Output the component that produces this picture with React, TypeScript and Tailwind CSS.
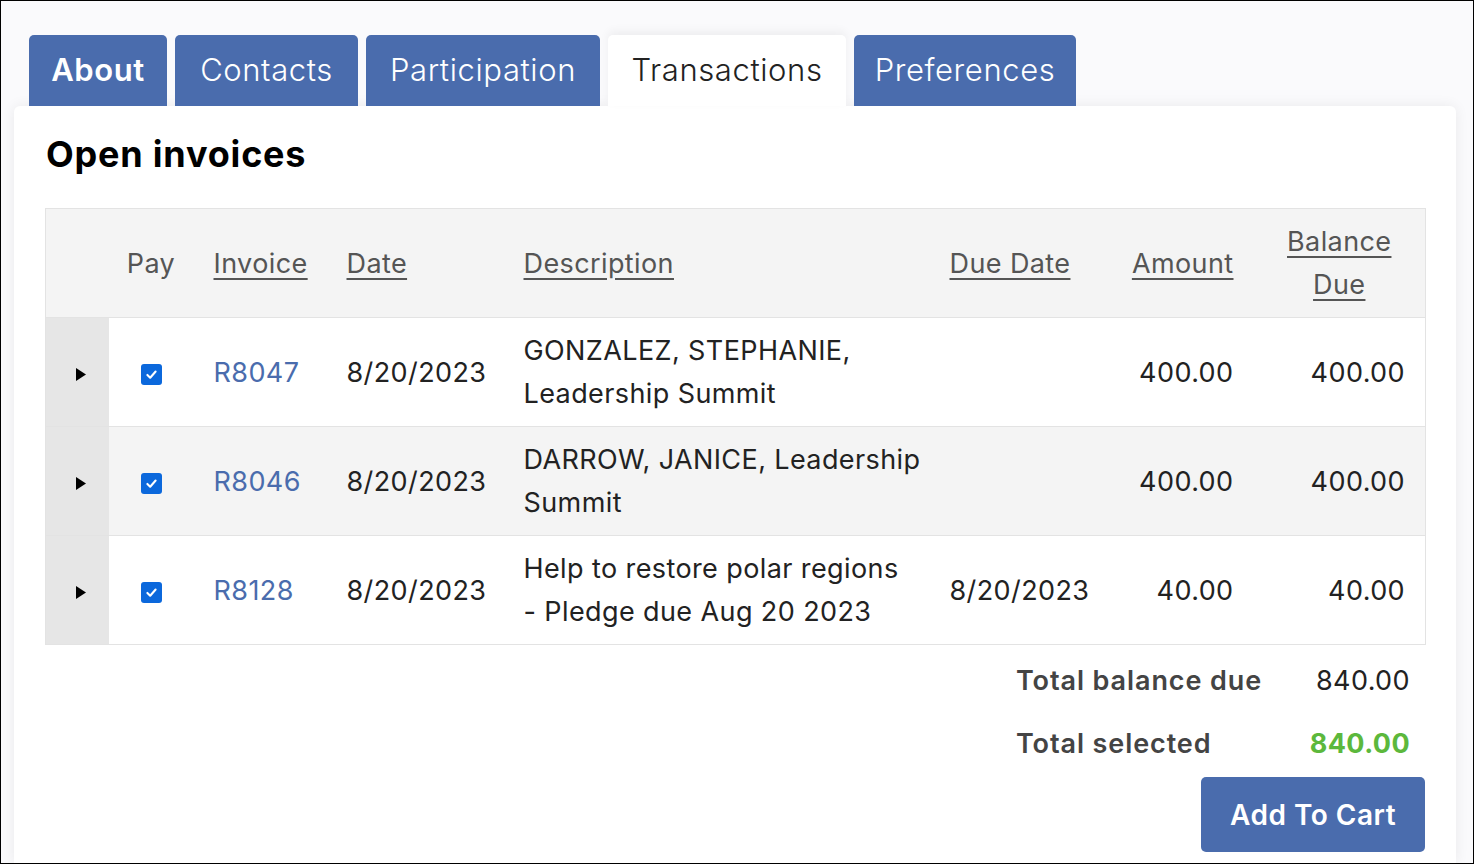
import React from 'react';

type Row = {
  invoice: string;
  date: string;
  desc: string[];
  due: string;
  amount: string;
  balance: string;
};

const rows: Row[] = [
  { invoice: 'R8047', date: '8/20/2023', desc: ['GONZALEZ, STEPHANIE,', 'Leadership Summit'], due: '', amount: '400.00', balance: '400.00' },
  { invoice: 'R8046', date: '8/20/2023', desc: ['DARROW, JANICE, Leadership', 'Summit'], due: '', amount: '400.00', balance: '400.00' },
  { invoice: 'R8128', date: '8/20/2023', desc: ['Help to restore polar regions', '- Pledge due Aug 20 2023'], due: '8/20/2023', amount: '40.00', balance: '40.00' },
];

const tabs = [
  { label: 'About', w: 'w-[138px]', bold: true },
  { label: 'Contacts', w: 'w-[183px]' },
  { label: 'Participation', w: 'w-[234px]' },
  { label: 'Transactions', w: 'w-[238px]', active: true },
  { label: 'Preferences', w: 'w-[222px]' },
];

const Check = () => (
  <span className="inline-flex w-[21px] h-[21px] rounded-[3px] bg-[#0b68dc] items-center justify-center align-middle">
    <svg width="13" height="13" viewBox="0 0 12 12" fill="none">
      <path d="M2.2 6.4 L4.8 9 L9.8 3.2" stroke="white" strokeWidth="1.9" strokeLinecap="round" strokeLinejoin="round" />
    </svg>
  </span>
);

const Caret = () => (
  <svg width="10" height="13" viewBox="0 0 10 13" className="inline-block">
    <polygon points="0,0 10,6.5 0,13" fill="#000" />
  </svg>
);

const App: React.FC = () => {
  return (
    <div
      className="w-[1474px] h-[864px] border border-black bg-[#fafafc] overflow-hidden flex flex-col"
      style={{ fontFamily: 'Inter, "Noto Sans", sans-serif' }}
    >
      {/* Tabs */}
      <div className="flex gap-2 pl-[28px] pt-[34px]">
        {tabs.map((t) => (
          <div
            key={t.label}
            className={`${t.w} h-[71px] rounded-t-[5px] flex items-center justify-center text-[31px] tracking-[0.6px] relative z-10 ${
              t.active
                ? 'bg-white text-[#222] font-light shadow-[0_-4px_10px_rgba(0,0,0,0.05)]'
                : 'bg-[#4a6cad] text-white'
            } ${t.bold ? 'font-semibold' : t.active ? '' : 'font-light'}`}
          >
            {t.label}
          </div>
        ))}
      </div>

      {/* Card */}
      <div className="ml-[13px] mr-[17px] flex-1 bg-white rounded-t-[6px] shadow-[0_0_14px_rgba(0,0,0,0.07)] px-[31px] pt-[27px]">
        <h1 className="text-[36px] leading-[42px] font-bold tracking-[0.8px] text-black mb-[33px] pl-[1px]">Open invoices</h1>

        <table className="w-[1380px] table-fixed border-collapse text-[27px] leading-[43px] tracking-[0.4px] text-[#222]">
          <colgroup>
            <col className="w-[63px]" />
            <col className="w-[85px]" />
            <col className="w-[133px]" />
            <col className="w-[177px]" />
            <col className="w-[426px]" />
            <col className="w-[178px]" />
            <col className="w-[146px]" />
            <col className="w-[172px]" />
          </colgroup>
          <thead>
            <tr className="bg-[#f4f4f4] text-[#555] border border-[#e3e3e3]">
              <th className="font-normal py-[11px]"></th>
              <th className="font-normal text-center">Pay</th>
              <th className="font-normal text-left pl-5"><span className="underline underline-offset-[5px]">Invoice</span></th>
              <th className="font-normal text-left pl-5"><span className="underline underline-offset-[5px]">Date</span></th>
              <th className="font-normal text-left pl-5"><span className="underline underline-offset-[5px]">Description</span></th>
              <th className="font-normal text-left pl-5"><span className="underline underline-offset-[5px]">Due Date</span></th>
              <th className="font-normal text-right pr-5"><span className="underline underline-offset-[5px]">Amount</span></th>
              <th className="font-normal text-center px-5 py-[11px]">
                <span className="underline underline-offset-[5px]">Balance</span>
                <br />
                <span className="underline underline-offset-[5px]">Due</span>
              </th>
            </tr>
          </thead>
          <tbody>
            {rows.map((r, i) => (
              <tr key={r.invoice} className={`border border-[#e3e3e3] ${i === 1 ? 'bg-[#f4f4f4]' : 'bg-white'}`}>
                <td className="bg-[#e6e6e6] text-center align-middle pl-2 py-[11px]">
                  <Caret />
                </td>
                <td className="text-center align-middle py-[11px]">
                  <Check />
                </td>
                <td className="pl-5 py-[11px] text-[#4a6cad]">{r.invoice}</td>
                <td className="pl-5 py-[11px]">{r.date}</td>
                <td className="pl-5 py-[11px] whitespace-nowrap">
                  {r.desc[0]}
                  <br />
                  {r.desc[1]}
                </td>
                <td className="pl-5 py-[11px]">{r.due}</td>
                <td className="pr-5 py-[11px] text-right">{r.amount}</td>
                <td className="pr-5 py-[11px] text-right">{r.balance}</td>
              </tr>
            ))}
          </tbody>
        </table>

        {/* Totals */}
        <div className="flex justify-end pr-[15px] mt-[14px]">
          <div className="grid grid-cols-[246px_148px] gap-y-[20px] text-[27px] leading-[43px] tracking-[0.4px]">
            <div className="font-semibold text-[#444] tracking-[0.9px] whitespace-nowrap">Total balance due</div>
            <div className="text-right text-[#222]">840.00</div>
            <div className="font-semibold text-[#444] tracking-[0.9px] whitespace-nowrap">Total selected</div>
            <div className="text-right font-bold text-[#5cb83c]">840.00</div>
          </div>
        </div>

        <div className="flex justify-end mt-[12px]">
          <button className="w-[224px] h-[75px] rounded-[5px] bg-[#4a6cad] text-white text-[28px] tracking-[0.5px] font-semibold">
            Add To Cart
          </button>
        </div>
      </div>
    </div>
  );
};

export default App;
